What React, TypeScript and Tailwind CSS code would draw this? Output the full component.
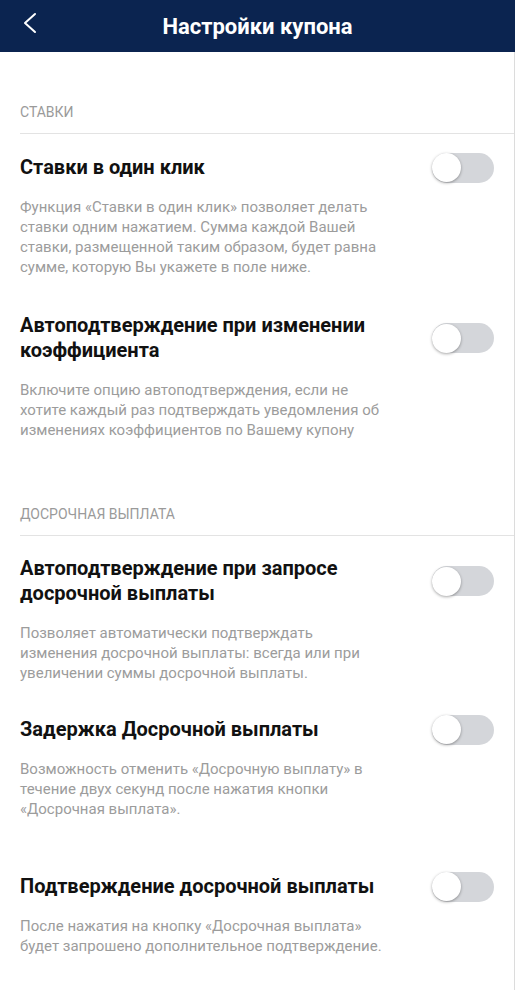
import { useState } from 'react';

type Item = { title: string; desc: string; gapTop: string };

const font = { fontFamily: 'Roboto, "Noto Sans", sans-serif' };

function Toggle() {
  const [on, setOn] = useState(false);
  return (
    <button
      onClick={() => setOn(!on)}
      className={`relative shrink-0 w-[62px] h-[30px] -my-[3px] rounded-full ${on ? 'bg-[#2f80ed]' : 'bg-[#d4d6da]'}`}
    >
      <span
        className={`absolute top-[0.5px] w-[29px] h-[29px] rounded-full bg-white shadow-[0_1px_3px_rgba(0,0,0,0.35)] ${on ? 'left-[33px]' : 'left-0'}`}
      />
    </button>
  );
}

function Setting({ item }: { item: Item }) {
  return (
    <div className={item.gapTop}>
      <div className="flex items-center justify-between gap-4">
        <span className="text-[20px] leading-[25px] font-bold text-[#111] max-w-[370px]">{item.title}</span>
        <Toggle />
      </div>
      <p className="mt-[17px] text-[15px] leading-5 text-[#9c9c9c] max-w-[366px]">{item.desc}</p>
    </div>
  );
}

function SectionLabel({ text, top }: { text: string; top: string }) {
  return (
    <div className={top}>
      <div className="pl-5 text-[14px] leading-5 uppercase text-[#9a9a9a]">{text}</div>
      <div className="ml-5 mt-[11px] border-b border-[#e3e3e3]" />
    </div>
  );
}

const bets: Item[] = [
  {
    title: 'Ставки в один клик',
    desc: 'Функция «Ставки в один клик» позволяет делать ставки одним нажатием. Сумма каждой Вашей ставки, размещенной таким образом, будет равна сумме, которую Вы укажете в поле ниже.',
    gapTop: 'mt-[21px]',
  },
  {
    title: 'Автоподтверждение при изменении коэффициента',
    desc: 'Включите опцию автоподтверждения, если не хотите каждый раз подтверждать уведомления об изменениях коэффициентов по Вашему купону',
    gapTop: 'mt-[36px]',
  },
];

const cashout: Item[] = [
  {
    title: 'Автоподтверждение при запросе досрочной выплаты',
    desc: 'Позволяет автоматически подтверждать изменения досрочной выплаты: всегда или при увеличении суммы досрочной выплаты.',
    gapTop: 'mt-[20px]',
  },
  {
    title: 'Задержка Досрочной выплаты',
    desc: 'Возможность отменить «Досрочную выплату» в течение двух секунд после нажатия кнопки «Досрочная выплата».',
    gapTop: 'mt-[34px]',
  },
  {
    title: 'Подтверждение досрочной выплаты',
    desc: 'После нажатия на кнопку «Досрочная выплата» будет запрошено дополнительное подтверждение.',
    gapTop: 'mt-[55px]',
  },
];

export default function App() {
  return (
    <div className="w-[515px] h-[990px] bg-white overflow-hidden" style={font}>
      {/* Header */}
      <div className="relative flex items-center justify-center h-[52px] bg-[#0b2450]">
        <button className="absolute left-[22px] top-[12px]">
          <svg width="18" height="22" viewBox="0 0 18 22" fill="none">
            <polyline points="13,2 3,11 13,20" stroke="white" strokeWidth="2" strokeLinecap="round" strokeLinejoin="round" />
          </svg>
        </button>
        <h1 className="text-[22px] font-bold text-white">Настройки купона</h1>
      </div>

      <div className="border-r border-[#dcdcdc] h-[938px]">
        <SectionLabel text="Ставки" top="pt-[50px]" />
        <div className="pl-5 pr-5">
          {bets.map((it) => <Setting key={it.title} item={it} />)}
        </div>

        <SectionLabel text="Досрочная выплата" top="pt-[64px]" />
        <div className="pl-5 pr-5">
          {cashout.map((it) => <Setting key={it.title} item={it} />)}
        </div>
      </div>
    </div>
  );
}
